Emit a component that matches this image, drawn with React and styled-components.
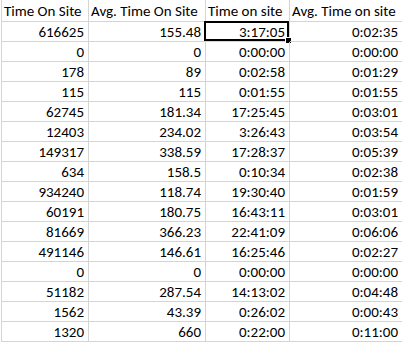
import React from 'react';
import styled, { createGlobalStyle } from 'styled-components';

const GlobalStyle = createGlobalStyle`
  html, body {
    margin: 0;
    padding: 0;
    background: #fff;
    overflow: hidden;
  }
`;

const Sheet = styled.div`
  display: grid;
  grid-template-columns: 87px 117px 84px 113px;
  margin-left: 1px;
  border-left: 1px solid #d4d4d4;
  font-family: Calibri, Carlito, 'Liberation Sans', Arial, sans-serif;
  font-size: 15px;
  color: #000;
`;

const Cell = styled.div`
  position: relative;
  box-sizing: border-box;
  height: ${(p) => (p.$head ? '22px' : '20px')};
  line-height: ${(p) => (p.$head ? '21px' : '19px')};
  padding: ${(p) => (p.$head ? '1px 2px 0 2px' : '1px 4px 0 2px')};
  border-right: 1px solid #d4d4d4;
  border-bottom: 1px solid #d4d4d4;
  text-align: ${(p) => (p.$head ? 'left' : 'right')};
  white-space: nowrap;
  overflow: ${(p) => (p.$active ? 'visible' : 'hidden')};

  ${(p) =>
    p.$active &&
    `
    &::before {
      content: '';
      position: absolute;
      left: -2px;
      top: -1px;
      right: 0;
      bottom: 0;
      border: 2px solid #000;
      pointer-events: none;
    }
    &::after {
      content: '';
      position: absolute;
      right: -3px;
      bottom: -3px;
      width: 5px;
      height: 5px;
      background: #000;
      border: 1px solid #fff;
    }
  `}
`;

const headers = ['Time On Site', 'Avg. Time On Site', 'Time on site', 'Avg. Time on site'];

const rows = [
  ['616625', '155.48', '3:17:05', '0:02:35'],
  ['0', '0', '0:00:00', '0:00:00'],
  ['178', '89', '0:02:58', '0:01:29'],
  ['115', '115', '0:01:55', '0:01:55'],
  ['62745', '181.34', '17:25:45', '0:03:01'],
  ['12403', '234.02', '3:26:43', '0:03:54'],
  ['149317', '338.59', '17:28:37', '0:05:39'],
  ['634', '158.5', '0:10:34', '0:02:38'],
  ['934240', '118.74', '19:30:40', '0:01:59'],
  ['60191', '180.75', '16:43:11', '0:03:01'],
  ['81669', '366.23', '22:41:09', '0:06:06'],
  ['491146', '146.61', '16:25:46', '0:02:27'],
  ['0', '0', '0:00:00', '0:00:00'],
  ['51182', '287.54', '14:13:02', '0:04:48'],
  ['1562', '43.39', '0:26:02', '0:00:43'],
  ['1320', '660', '0:22:00', '0:11:00'],
];

export default function App() {
  return (
    <>
      <GlobalStyle />
      <Sheet>
        {headers.map((h) => (
          <Cell key={h} $head>
            {h}
          </Cell>
        ))}
        {rows.map((row, r) =>
          row.map((v, c) => (
            <Cell key={`${r}-${c}`} $active={r === 0 && c === 2}>
              {v}
            </Cell>
          ))
        )}
      </Sheet>
    </>
  );
}
